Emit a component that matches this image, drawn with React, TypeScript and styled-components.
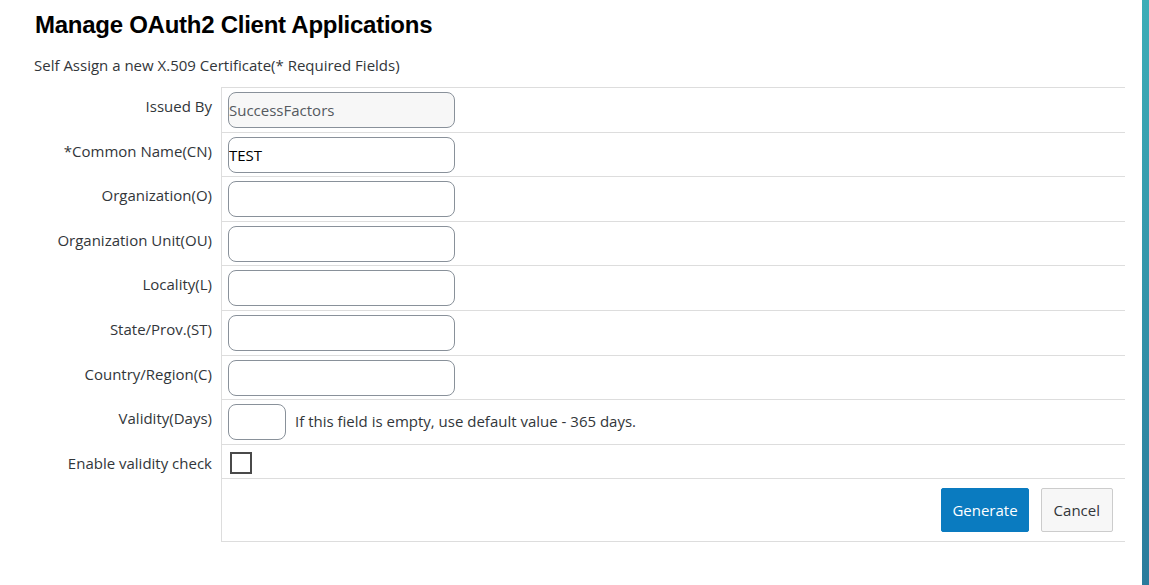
import { createGlobalStyle, styled } from 'styled-components';

const GlobalStyle = createGlobalStyle`
	html, body {
		margin: 0;
		padding: 0;
		background: #ffffff;
	}

	body {
		font-family: 'Open Sans', 'Liberation Sans', Arial, sans-serif;
		color: #32363a;
	}
`;

interface Field {
	label: string;
	value?: string;
	readOnly?: boolean;
}

const fields: Field[] = [
	{ label: 'Issued By', value: 'SuccessFactors', readOnly: true },
	{ label: '*Common Name(CN)', value: 'TEST' },
	{ label: 'Organization(O)' },
	{ label: 'Organization Unit(OU)' },
	{ label: 'Locality(L)' },
	{ label: 'State/Prov.(ST)' },
	{ label: 'Country/Region(C)' },
];

const Page = styled.div`
	display: flex;
	height: 585px;
	overflow: hidden;
`;

const Main = styled.main`
	flex: 1;
	padding: 0 17px 0 0;
`;

const SideBar = styled.div`
	width: 7px;
	flex-shrink: 0;
	background: linear-gradient(180deg, #3dadb7 0%, #2a7b9c 100%);
`;

const Title = styled.h1`
	margin: 0;
	padding: 10px 0 0 35px;
	font-family: 'Liberation Sans', Arial, sans-serif;
	font-size: 24px;
	line-height: 30px;
	font-weight: 700;
	letter-spacing: -0.26px;
	color: #000000;
`;

const Subtitle = styled.p`
	margin: 0;
	padding: 16px 0 0 34px;
	font-size: 15px;
	line-height: 19px;
	color: #32363a;
`;

const Form = styled.div`
	margin: 12px 0 0 221px;
	display: flex;
	flex-direction: column;
	border-bottom: 1px solid #dddddd;
`;

const Row = styled.div`
	display: grid;
	grid-template-columns: 221px 1fr;
	margin-left: -221px;
`;

const Label = styled.div`
	text-align: right;
	padding: 10px 9px 0 0;
	font-size: 15px;
	line-height: 19px;
	color: #32363a;
	white-space: nowrap;
`;

const Cell = styled.div<{ $pad?: string; $end?: boolean }>`
	display: flex;
	align-items: center;
	justify-content: ${(p) => (p.$end ? 'flex-end' : 'flex-start')};
	gap: ${(p) => (p.$end ? 12 : 9)}px;
	border-top: 1px solid #dddddd;
	border-left: 1px solid #dddddd;
	padding: ${(p) => p.$pad ?? '4px 6px 3.6px'};
`;

const TextInput = styled.input<{ $width?: number }>`
	box-sizing: border-box;
	width: ${(p) => p.$width ?? 227}px;
	height: 36px;
	padding: 0;
	border: 1px solid #89919a;
	border-radius: 8px;
	background: #ffffff;
	font-family: 'Open Sans', 'Liberation Sans', Arial, sans-serif;
	font-size: 15px;
	color: #000000;
	outline: none;

	&:read-only {
		background: #f7f7f7;
		color: #555a5f;
	}
`;

const Hint = styled.span`
	margin-bottom: 3px;
	font-size: 15px;
	color: #32363a;
`;

const Check = styled.span`
	display: block;
	box-sizing: border-box;
	width: 22px;
	height: 22px;
	margin: 3px 0 0 2px;
	border: 2px solid #4a4a4a;
	background: #ffffff;
`;

const Button = styled.button<{ $primary?: boolean }>`
	height: 44px;
	padding: 0 ${(p) => (p.$primary ? 10 : 12)}px;
	border-radius: 2px;
	border: 1px solid ${(p) => (p.$primary ? '#0a7bc0' : '#cccccc')};
	background: ${(p) => (p.$primary ? '#0a7bc0' : '#f7f7f7')};
	color: ${(p) => (p.$primary ? '#ffffff' : '#32363a')};
	font-family: 'Open Sans', 'Liberation Sans', Arial, sans-serif;
	font-size: 15px;
	cursor: pointer;
`;

const App = () => {
	return (
		<Page>
			<GlobalStyle />
			<Main>
				<Title>Manage OAuth2 Client Applications</Title>
				<Subtitle>Self Assign a new X.509 Certificate(* Required Fields)</Subtitle>
				<Form>
					{fields.map((f) => (
						<Row key={f.label}>
							<Label>{f.label}</Label>
							<Cell>
								<TextInput
									type='text'
									defaultValue={f.value ?? ''}
									readOnly={f.readOnly}
								/>
							</Cell>
						</Row>
					))}
					<Row>
						<Label>Validity(Days)</Label>
						<Cell>
							<TextInput type='text' $width={58} />
							<Hint>If this field is empty, use default value - 365 days.</Hint>
						</Cell>
					</Row>
					<Row>
						<Label>Enable validity check</Label>
						<Cell $pad='4px 6px 4px 6px'>
							<Check />
						</Cell>
					</Row>
					<Row>
						<Label />
						<Cell $pad='9px 12px 9px 6px' $end>
							<Button $primary>Generate</Button>
							<Button>Cancel</Button>
						</Cell>
					</Row>
				</Form>
			</Main>
			<SideBar />
		</Page>
	);
};

export default App;
